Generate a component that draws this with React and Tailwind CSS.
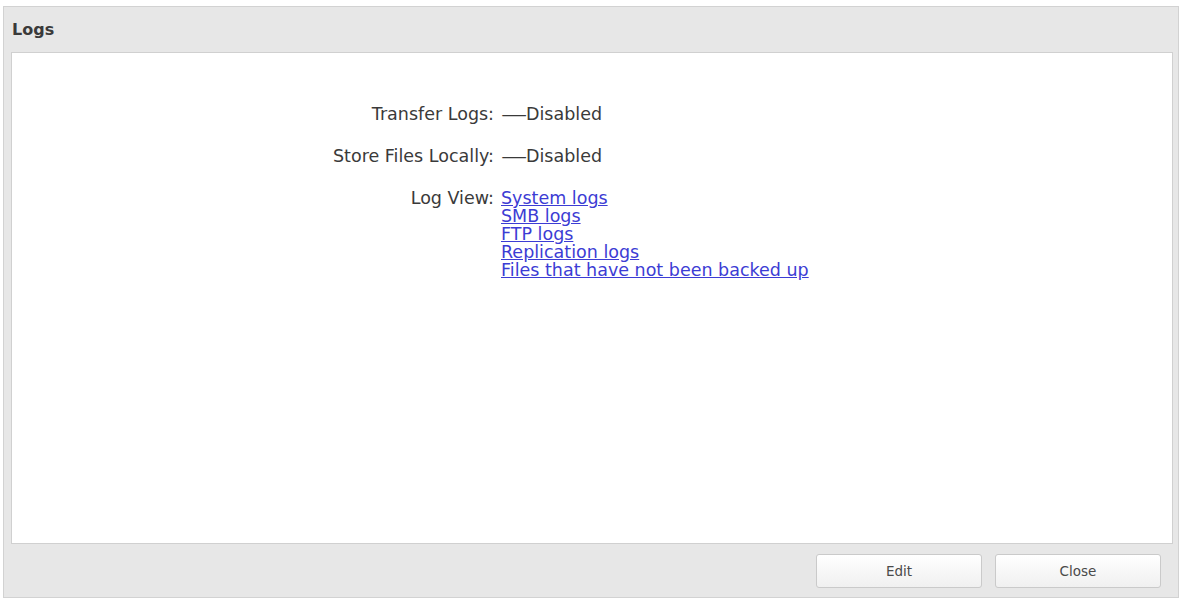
import React from "react";

export default function App() {
  const links = [
    "System logs",
    "SMB logs",
    "FTP logs",
    "Replication logs",
    "Files that have not been backed up",
  ];
  const dash = (
    <span className="inline-block w-[25px] overflow-visible">
      <span className="inline-block origin-left scale-x-150">—</span>
    </span>
  );
  return (
    <div className="w-[1182px] h-[598px] bg-white pt-[6px] pl-[3px] pr-[3px] font-['DejaVu_Sans',_'Liberation_Sans',_sans-serif]">
      <div className="h-[592px] border border-[#d2d2d2] bg-[#e7e7e7] flex flex-col">
        <div className="h-[45px] shrink-0 pl-[8px] flex items-center text-[16px] font-bold text-[#3a3a3a]">
          Logs
        </div>
        <div className="h-[492px] shrink-0 ml-[7px] mr-[5px] bg-white border border-[#d0d0d0] pt-[52px]">
          <div className="grid grid-cols-[482px_1fr] gap-x-[7px] gap-y-[24px] text-[17.5px] leading-[18px] text-[#3a3a3a]">
            <div className="text-right">Transfer Logs:</div>
            <div>{dash}Disabled</div>
            <div className="text-right">Store Files Locally:</div>
            <div>{dash}Disabled</div>
            <div className="text-right">Log View:</div>
            <div className="flex flex-col">
              {links.map((l) => (
                <a key={l} href="#" className="text-[#3c3cd4] underline w-fit">
                  {l}
                </a>
              ))}
            </div>
          </div>
        </div>
        <div className="flex-1 flex justify-end items-start pt-[10px] pr-[17px] gap-[13px]">
          <button className="w-[166px] h-[34px] rounded-[3px] border border-[#cacaca] bg-gradient-to-b from-white to-[#f0f0f0] text-[13.5px] text-[#4a4a4a]">
            Edit
          </button>
          <button className="w-[166px] h-[34px] rounded-[3px] border border-[#cacaca] bg-gradient-to-b from-white to-[#f0f0f0] text-[13.5px] text-[#4a4a4a]">
            Close
          </button>
        </div>
      </div>
    </div>
  );
}
